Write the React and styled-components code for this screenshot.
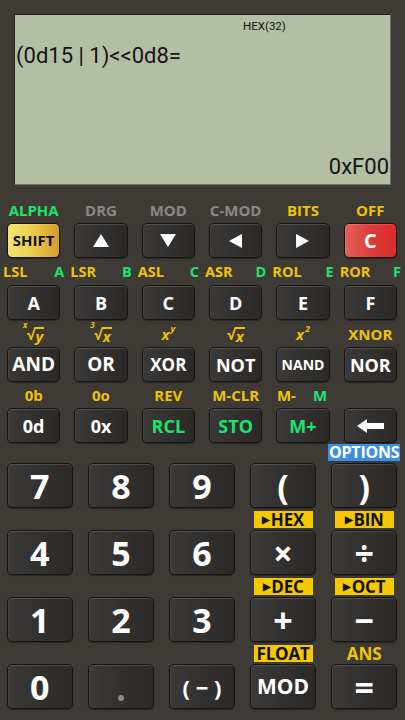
import React from "react";
import styled, { createGlobalStyle } from "styled-components";

const Global = createGlobalStyle`
  html, body { margin: 0; padding: 0; background: #3e3a36; }
  * { box-sizing: border-box; }
`

const GREEN = "#1be56b"
const YELLOW = "#f0c400"
const GRAY = "#8a8886"

const Page = styled.div`
  width: 405px;
  height: 720px;
  background: #3e3a36;
  display: flex;
  flex-direction: column;
  font-family: "Open Sans", "Liberation Sans", sans-serif;
  overflow: hidden;
`

const Screen = styled.div`
  margin: 14px 14px 0;
  height: 171px;
  background: #b3bea5;
  border-top: 1px solid #22201e;
  border-left: 1px solid #22201e;
  border-right: 1px solid #6d7166;
  border-bottom: 1px solid #6d7166;
  display: flex;
  flex-direction: column;
  padding: 4px 1px 5px 1px;
  font-family: Roboto, "Noto Sans", sans-serif;
  color: #151515;
`

const Mode = styled.div`
  font-size: 11.5px;
  line-height: 14px;
  padding-left: 227px;
`

const Expr = styled.div`
  font-size: 22px;
  line-height: 26px;
  margin-top: 10px;
  white-space: pre;
`

const Result = styled.div`
  margin-top: auto;
  font-size: 22px;
  line-height: 24px;
  text-align: right;
`

const FnPad = styled.div`
  margin-top: 11px;
  padding: 0 8px 0 7px;
  display: grid;
  grid-template-columns: repeat(6, 1fr);
  column-gap: 14px;
`

const NumPad = styled.div`
  margin-top: -2px;
  padding: 0 8px 0 7px;
  display: grid;
  grid-template-columns: repeat(5, 1fr);
  column-gap: 15.5px;
`

const Cell = styled.div`
  display: flex;
  flex-direction: column;
`

const Label = styled.div`
  height: ${p => p.$h}px;
  margin: 0 -4px;
  display: flex;
  align-items: center;
  justify-content: ${p => (p.$split ? "space-between" : "center")};
  font-weight: 700;
  font-size: 15px;
  color: ${p => p.$color || YELLOW};
  white-space: nowrap;
`

const Tag = styled.span`
  color: ${p => p.$color};
  font-size: ${p => p.$size || 14}px;
  margin: ${p => p.$gap || "0"};
`

const Boxed = styled.span`
  background: ${p => p.$bg || "#f5c800"};
  color: ${p => p.$fg || "#111"};
  width: ${p => p.$w || 59}px;
  height: 17px;
  line-height: 17px;
  font-size: ${p => p.$size || 17}px;
  font-weight: 700;
  display: flex;
  align-items: center;
  justify-content: center;
  letter-spacing: -0.2px;
`

const Arrowhead = styled.span`
  font-size: 10px;
  margin-right: 1px;
`

const Math = styled.span`
  font-style: italic;
  font-size: 15px;
  color: ${YELLOW};
  display: inline-flex;
  align-items: flex-end;
`

const Idx = styled.span`
  font-size: 8px;
  line-height: 8px;
  align-self: flex-start;
  margin-right: -1px;
  margin-top: -3px;
`

const Over = styled.span`
  border-top: 2px solid ${YELLOW};
  line-height: 15px;
  padding: 0 1px;
`

const Sup = styled.span`
  font-size: 9px;
  line-height: 9px;
  align-self: flex-start;
  margin-left: 1px;
`

const Key = styled.div`
  height: ${p => p.$h}px;
  border-radius: 5px;
  border: 1px solid #161514;
  background: ${p =>
    p.$tone === "shift"
      ? "linear-gradient(90deg, #f2e46e 0%, #e9cf4e 45%, #d89a2d 100%)"
      : p.$tone === "clear"
      ? "linear-gradient(90deg, #e2605b 0%, #dd3a36 55%, #d92b2b 100%)"
      : "linear-gradient(90deg, #3c3a38 0%, #333130 50%, #2b2928 100%)"};
  box-shadow: inset 0 1px 0 rgba(255, 255, 255, 0.14), inset 1px 0 0 rgba(255, 255, 255, 0.05), 0 1px 1px rgba(0, 0, 0, 0.35);
  display: flex;
  align-items: center;
  justify-content: center;
  color: ${p => p.$color || "#fff"};
  font-weight: 700;
  font-size: ${p => p.$size || 18}px;
  line-height: 1;
  white-space: pre;
`

const Dot = styled.span`
  width: 6px;
  height: 6px;
  border-radius: 50%;
  background: #8d8b89;
  margin-top: 22px;
`

const Tri = ({ dir }) => {
  const pts = {
    up: "8,0 16,13 0,13",
    down: "0,0 16,0 8,13",
    left: "0,7 13,0 13,14",
    right: "0,0 13,7 0,14",
  }[dir]
  const horiz = dir === "left" || dir === "right"
  return (
    <svg width={horiz ? 13 : 16} height={horiz ? 14 : 13} viewBox={horiz ? "0 0 13 14" : "0 0 16 13"}>
      <polygon points={pts} fill="#fff" />
    </svg>
  )
}

const BackArrow = () => (
  <svg width="27" height="14" viewBox="0 0 27 14">
    <polygon points="0,7 10,0 10,4 27,4 27,10 10,10 10,14" fill="#fff" />
  </svg>
)

const Root = ({ idx, arg }) => (
  <Math>
    <Idx>{idx}</Idx>√<Over>{arg}</Over>
  </Math>
)

const fnRows = [
  {
    labels: [
      <Label $h={27} $color={GREEN}>ALPHA</Label>,
      <Label $h={27} $color={GRAY}>DRG</Label>,
      <Label $h={27} $color={GRAY}>MOD</Label>,
      <Label $h={27} $color={GRAY}>C-MOD</Label>,
      <Label $h={27}>BITS</Label>,
      <Label $h={27}>OFF</Label>,
    ],
    keys: [
      <Key $h={35} $tone="shift" $color="#111" $size={15}>SHIFT</Key>,
      <Key $h={35}><Tri dir="up" /></Key>,
      <Key $h={35}><Tri dir="down" /></Key>,
      <Key $h={35}><Tri dir="left" /></Key>,
      <Key $h={35}><Tri dir="right" /></Key>,
      <Key $h={35} $tone="clear" $size={20}>C</Key>,
    ],
  },
  {
    labels: ["LSL:A", "LSR:B", "ASL:C", "ASR:D", "ROL:E", "ROR:F"].map(s => {
      const [y, g] = s.split(":")
      return (
        <Label $h={27} $split>
          <Tag $color={YELLOW} $size={14.5}>{y}</Tag>
          <Tag $color={GREEN} $size={14.5}>{g}</Tag>
        </Label>
      )
    }),
    keys: ["A", "B", "C", "D", "E", "F"].map(k => <Key $h={35}>{k}</Key>),
  },
  {
    labels: [
      <Label $h={27}><Root idx="x" arg="y" /></Label>,
      <Label $h={27}><Root idx="3" arg="x" /></Label>,
      <Label $h={27}><Math>x<Sup>y</Sup></Math></Label>,
      <Label $h={27}><Math>√<Over>x</Over></Math></Label>,
      <Label $h={27}><Math>x<Sup>2</Sup></Math></Label>,
      <Label $h={27}>XNOR</Label>,
    ],
    keys: [
      <Key $h={35} $size={19}>AND</Key>,
      <Key $h={35} $size={19}>OR</Key>,
      <Key $h={35} $size={17}>XOR</Key>,
      <Key $h={35} $size={18}>NOT</Key>,
      <Key $h={35} $size={14}>NAND</Key>,
      <Key $h={35} $size={18}>NOR</Key>,
    ],
  },
  {
    labels: [
      <Label $h={26}>0b</Label>,
      <Label $h={26}>0o</Label>,
      <Label $h={26}>REV</Label>,
      <Label $h={26}>M-CLR</Label>,
      <Label $h={26}>
        <Tag $color={YELLOW} $size={15} $gap="0 0 0 -2px">M-</Tag>
        <Tag $color={GREEN} $size={15} $gap="0 0 0 17px">M</Tag>
      </Label>,
      <Label $h={26} />,
    ],
    keys: [
      <Key $h={35}>0d</Key>,
      <Key $h={35}>0x</Key>,
      <Key $h={35} $color={GREEN}>RCL</Key>,
      <Key $h={35} $color={GREEN}>STO</Key>,
      <Key $h={35} $color={GREEN}>M+</Key>,
      <Key $h={35}><BackArrow /></Key>,
    ],
  },
]

const numRows = [
  {
    labels: [null, null, null, null, <Boxed $bg="#3a8ee6" $fg="#fff" $w={72} $size={16}>OPTIONS</Boxed>],
    keys: ["7", "8", "9", "(", ")"],
  },
  {
    labels: [null, null, null,
      <Boxed><Arrowhead>▶</Arrowhead>HEX</Boxed>,
      <Boxed><Arrowhead>▶</Arrowhead>BIN</Boxed>],
    keys: ["4", "5", "6", "×", "÷"],
  },
  {
    labels: [null, null, null,
      <Boxed><Arrowhead>▶</Arrowhead>DEC</Boxed>,
      <Boxed><Arrowhead>▶</Arrowhead>OCT</Boxed>],
    keys: ["1", "2", "3", "+", "−"],
  },
  {
    labels: [null, null, null,
      <Boxed>FLOAT</Boxed>,
      <Tag $color={YELLOW} $size={17}>ANS</Tag>],
    keys: ["0", ".", "( − )", "MOD", "="],
  },
]

const bigKey = k => {
  if (k === ".") return <Key $h={45}><Dot /></Key>
  if (k === "( − )") return <Key $h={45} $size={22}>{"( − )"}</Key>
  if (k === "MOD") return <Key $h={45} $size={21}>MOD</Key>
  return <Key $h={45} $size={34}>{k}</Key>
}

export default function App() {
  return (
    <Page>
      <Global />
      <Screen>
        <Mode>HEX(32)</Mode>
        <Expr>{"(0d15 | 1)<<0d8="}</Expr>
        <Result>0xF00</Result>
      </Screen>
      <FnPad>
        {fnRows.map((row, r) =>
          row.keys.map((k, i) => (
            <Cell key={r + "-" + i}>
              {row.labels[i]}
              {k}
            </Cell>
          ))
        )}
      </FnPad>
      <NumPad>
        {numRows.map((row, r) =>
          row.keys.map((k, i) => (
            <Cell key={r + "-" + i}>
              <Label $h={22}>{row.labels[i]}</Label>
              {bigKey(k)}
            </Cell>
          ))
        )}
      </NumPad>
    </Page>
  )
}
